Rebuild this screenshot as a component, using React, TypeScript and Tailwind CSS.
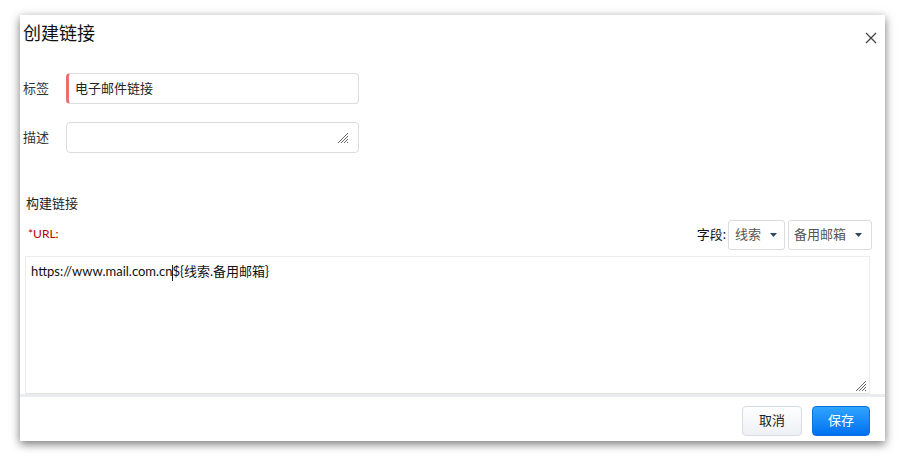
import React from "react";

const Caret = () => (
  <svg width="7" height="4" viewBox="0 0 7 4" className="ml-[9px]">
    <path d="M0 0 L7 0 L3.5 4 Z" fill="#2f4a60" />
  </svg>
);

const Grip = () => (
  <svg width="12" height="12" viewBox="0 0 12 12">
    <path d="M11 1 L1 11 M11 4 L4 11 M11 7 L7 11 M11 10 L10 11" stroke="#666" strokeWidth="1" />
  </svg>
);

export default function App() {
  return (
    <div
      className="w-[905px] h-[456px] bg-white pt-[15px] pl-[20px]"
      style={{ fontFamily: 'Lato, "Noto Sans CJK SC", sans-serif' }}
    >
      <div className="relative w-[865px] h-[426px] bg-white shadow-[0_3px_9px_rgba(0,0,0,0.55)] flex flex-col">
        <div className="flex items-start justify-between pl-[3px] pr-[8px] pt-[4px] h-[50px]">
          <div className="text-[18px] leading-[28px] text-[#111]">创建链接</div>
          <svg width="12" height="12" viewBox="0 0 12 12" className="mt-[13px]">
            <path d="M1 1 L11 11 M11 1 L1 11" stroke="#444" strokeWidth="1.3" />
          </svg>
        </div>

        <div className="flex items-center pl-[3px] mt-[8px]">
          <div className="w-[43px] text-[13px] text-[#333]">标签</div>
          <div className="w-[293px] h-[31px] border border-[#dcdcdc] border-l-[3px] border-l-[#ee6f6f] rounded-[4px] flex items-center pl-[6px] text-[13px] text-[#222]">
            电子邮件链接
          </div>
        </div>

        <div className="flex items-center pl-[3px] mt-[18px]">
          <div className="w-[43px] text-[13px] text-[#333]">描述</div>
          <div className="w-[293px] h-[31px] border border-[#dcdcdc] rounded-[4px] flex items-center justify-end pr-[9px]">
            <Grip />
          </div>
        </div>

        <div className="pl-[6px] mt-[40px] text-[13px] text-[#222] leading-[20px]">构建链接</div>

        <div className="flex items-end justify-between mt-[7px] pl-[8px] pr-[13px]">
          <div className="text-[12px] text-[#b30000] mb-[7px]">*URL:</div>
          <div className="flex items-center">
            <span className="text-[13px] text-[#111] mr-[2px]">字段:</span>
            <div className="w-[57px] h-[30px] border border-[#dcdcdc] rounded-[3px] flex items-center pl-[6px] text-[13px] text-[#555]">
              线索
              <Caret />
            </div>
            <div className="ml-[3px] w-[84px] h-[30px] border border-[#dcdcdc] rounded-[3px] flex items-center pl-[5px] text-[13px] text-[#555]">
              备用邮箱
              <Caret />
            </div>
          </div>
        </div>

        <div className="ml-[5px] mt-[6px] w-[845px] h-[138px] border border-[#ececec] border-b-[#e3e3e3] relative">
          <div className="pl-[5px] pt-[4px] text-[13px] text-[#111] leading-[20px]">
            https://www.mail.com.cn<span className="inline-block w-[1px] h-[16px] bg-[#222] align-middle -ml-[1px]"></span>
            {"${线索.备用邮箱}"}
          </div>
          <div className="absolute right-[2px] bottom-[1px]">
            <Grip />
          </div>
        </div>
        <div className="h-[3px] bg-[#ebecef]"></div>

        <div className="flex justify-end items-center pr-[15px] pt-[9px] gap-[10px]">
          <button className="w-[60px] h-[30px] rounded-[4px] border border-[#d6dbe4] bg-gradient-to-b from-[#ffffff] to-[#eef0f5] text-[13px] text-[#222]">
            取消
          </button>
          <button className="w-[58px] h-[30px] rounded-[4px] border border-[#0a6fe0] bg-gradient-to-b from-[#2fa4ff] to-[#0070f0] text-[13px] text-white">
            保存
          </button>
        </div>
      </div>
    </div>
  );
}
